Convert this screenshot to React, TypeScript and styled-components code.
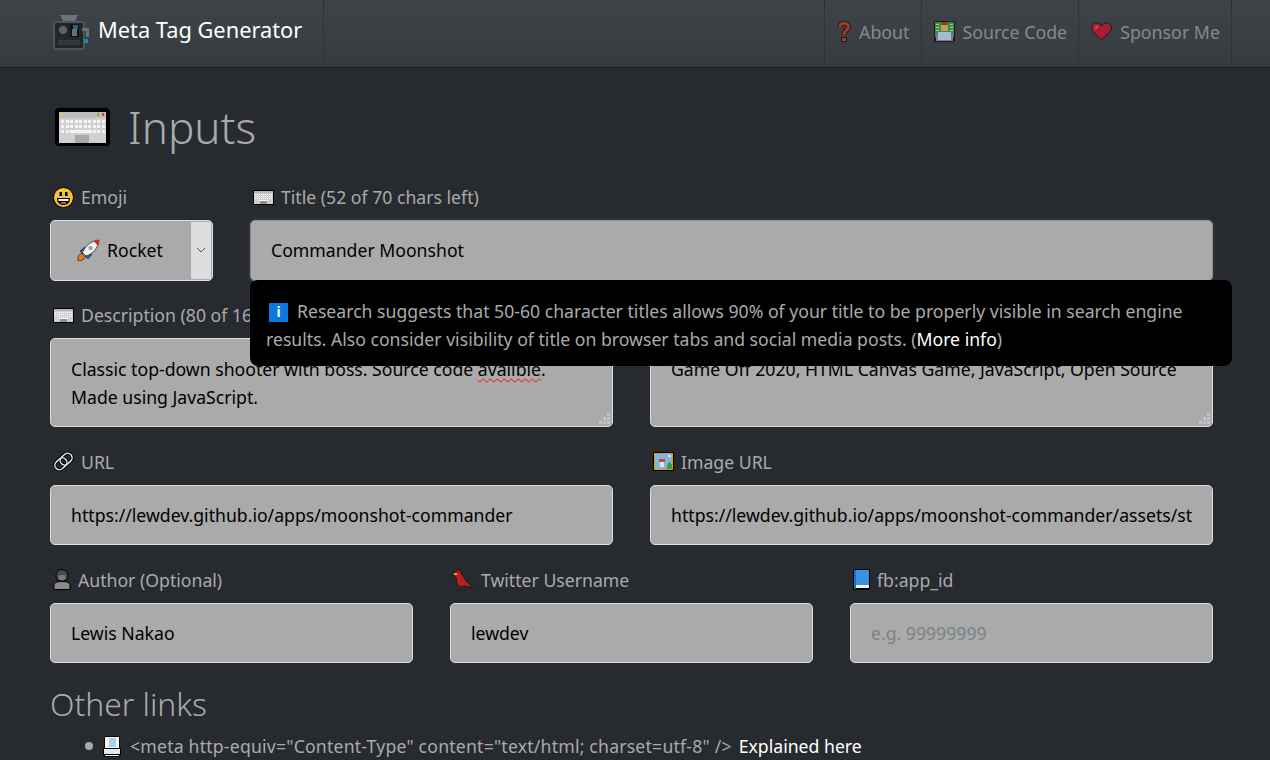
import React from "react";
import styled, { createGlobalStyle } from "styled-components";

const FONT = `"Noto Sans", "Open Sans", "Liberation Sans", sans-serif`;

const GlobalStyle = createGlobalStyle`
  html, body {
    margin: 0;
    height: 760px;
    overflow: hidden;
    background: #272b30;
  }
  body {
    font-family: ${FONT};
    font-size: 17.65px;
    color: #aaaaaa;
  }
  * { box-sizing: border-box; }
`;

const Bar = styled.header`
  display: flex;
  align-items: stretch;
  height: 68px;
  padding: 0 38px 0 52px;
  background: linear-gradient(#3e4348, #3a3f44 60%, #373b40);
  border-bottom: 1px solid #1c1e22;
`;

const Brand = styled.a`
  display: flex;
  align-items: center;
  gap: 6px;
  padding: 0 21px 4px 0;
  border-right: 1px solid #2f3337;
  color: #ffffff;
  font-size: 21.8px;
  white-space: nowrap;
`;

const BrandName = styled.span`
  padding-bottom: 4px;
`;

const NavLinks = styled.nav`
  display: flex;
  margin-left: auto;
  border-right: 1px solid #2f3337;
`;

const NavLink = styled.a`
  display: flex;
  align-items: center;
  gap: 8px;
  padding: 0 11px 4px 12px;
  border-left: 1px solid #2f3337;
  color: #85898c;
  font-size: 17.8px;
  white-space: nowrap;
`;

const Main = styled.main`
  padding: 0 57px 0 50px;
`;

const PageTitle = styled.h1`
  display: flex;
  align-items: center;
  gap: 18px;
  height: 115px;
  margin: 0;
  padding: 2px 0 0 5px;
  font-size: 44px;
  font-weight: 300;
  color: #aaaaaa;
`;

const FormGrid = styled.form`
  position: relative;
  display: grid;
  grid-template-columns: repeat(6, 1fr);
  column-gap: 37px;
  row-gap: 20.75px;
`;

const Field = styled.div<{ $span: number }>`
  grid-column: span ${(p) => p.$span};
  display: flex;
  flex-direction: column;
  gap: 9px;
`;

const Label = styled.label`
  display: flex;
  align-items: center;
  gap: 7px;
  height: 28px;
  padding-left: 3px;
  font-size: 17.65px;
  color: #aaaaaa;
  white-space: nowrap;
`;

const TextInput = styled.input<{ $focused?: boolean }>`
  width: 100%;
  height: 60.5px;
  padding: 0 20px;
  border: 1px solid ${(p) => (p.$focused ? "#8d8d8d" : "#dddddd")};
  border-radius: 5px;
  outline: none;
  background: #aaaaaa;
  color: #000000;
  font-family: ${FONT};
  font-size: 17.65px;
  box-shadow: ${(p) => (p.$focused ? "0 0 0 2px #2f3338" : "none")};
  &::placeholder {
    color: #7a8288;
    opacity: 1;
  }
`;

const SelectBox = styled.div`
  display: flex;
  height: 60.5px;
  border: 1px solid #dddddd;
  border-radius: 5px;
  overflow: hidden;
  background: #aaaaaa;
  color: #000000;
  font-size: 17.65px;
`;

const SelectValue = styled.div`
  flex: 1;
  display: flex;
  align-items: center;
  justify-content: center;
  gap: 7px;
  padding-right: 2px;
`;

const SelectArrow = styled.div`
  display: flex;
  align-items: center;
  justify-content: center;
  width: 20px;
  margin: 1px 1px 1px 0;
  background: #dddddd;
`;

const TextArea = styled.div`
  position: relative;
  height: 88.5px;
  padding: 16px 20px 0;
  border: 1px solid #dddddd;
  border-radius: 5px;
  background: #aaaaaa;
  color: #000000;
  font-size: 17.65px;
  line-height: 28px;
`;

const Misspelled = styled.span`
  text-decoration: underline wavy #ff0000 1px;
  text-underline-offset: 2px;
`;

const Grip = styled.svg`
  position: absolute;
  right: 1px;
  bottom: 1px;
`;

const Tip = styled.div`
  position: absolute;
  top: 97px;
  left: 200px;
  width: 982px;
  height: 86px;
  padding: 17px 16px 0;
  border-radius: 8px;
  background: #000000;
  color: #aaaaaa;
  font-size: 17.65px;
  line-height: 28px;
  z-index: 2;
`;

const TipIcon = styled.span`
  display: inline-flex;
  align-items: center;
  justify-content: center;
  width: 19px;
  height: 19px;
  margin: 0 9px 0 3px;
  vertical-align: 1px;
  background: #0a78dc;
  color: #ffffff;
  font-size: 14px;
  font-weight: 700;
  line-height: 1;
`;

const WhiteLink = styled.a`
  color: #ffffff;
`;

const SectionTitle = styled.h3`
  margin: 19px 0 0;
  font-size: 31.8px;
  font-weight: 300;
  line-height: 44px;
  color: #aaaaaa;
`;

const LinkList = styled.ul`
  margin: 8px 0 0;
  padding: 0 0 0 35px;
  list-style: none;
`;

const LinkItem = styled.li`
  position: relative;
  display: flex;
  align-items: center;
  gap: 9px;
  padding-left: 18px;
  white-space: nowrap;
  &::before {
    content: "";
    position: absolute;
    left: 0;
    top: 50%;
    width: 8px;
    height: 8px;
    margin-top: -4px;
    border-radius: 50%;
    background: #aaaaaa;
  }
`;

const MetaCode = styled.span`
  letter-spacing: 0.2px;
  margin-right: 7px;
`;

const Px = styled.svg`
  flex: none;
  shape-rendering: crispEdges;
`;

const Smooth = styled.svg`
  flex: none;
`;

const KeyboardIcon = () => (
  <Px width="55" height="38" viewBox="0 0 55 38">
    <rect x="0" y="0" width="55" height="38" rx="4" fill="#000" />
    <rect x="4" y="4" width="47" height="31" fill="#d0d0d0" />
    <rect x="4" y="4" width="47" height="6" fill="#bcbcbc" />
    <rect x="5" y="5" width="2" height="3" fill="#e8d820" />
    <rect x="42" y="5" width="2" height="3" fill="#8bb030" />
    <rect x="47" y="5" width="2" height="3" fill="#d84030" />
    {[0, 1, 2].map((r) =>
      [0, 1, 2, 3, 4, 5, 6, 7, 8, 9].map((c) => (
        <rect key={`${r}-${c}`} x={6 + c * 4.5} y={12 + r * 5} width="3" height="3" fill="#f4f4f4" />
      ))
    )}
    <rect x="17" y="22" width="20" height="3" fill="#f4f4f4" />
    <rect x="20" y="27" width="14" height="8" fill="#a8a8a8" />
  </Px>
);

const SmallKeyboardIcon = () => (
  <Px width="21" height="15" viewBox="0 0 21 15">
    <rect width="21" height="15" rx="1" fill="#000" />
    <rect x="1" y="1" width="19" height="13" fill="#cfcfcf" />
    <rect x="1" y="1" width="19" height="2" fill="#b4b4b4" />
    {[4, 6, 8].map((y) =>
      [2, 4, 6, 8, 10, 12, 14, 16, 18].map((x) => (
        <rect key={`${x}-${y}`} x={x} y={y} width="1" height="1" fill="#fafafa" />
      ))
    )}
    <rect x="6" y="10" width="9" height="1" fill="#fafafa" />
    <rect x="7" y="11" width="7" height="3" fill="#8f8f8f" />
  </Px>
);

const LogoIcon = () => (
  <Px width="40" height="38" viewBox="0 0 40 38">
    <path d="M8 2h18l-3 6H11z" fill="#6d7276" />
    <rect x="2" y="9" width="30" height="27" rx="2" fill="#23262a" stroke="#50555a" strokeWidth="1.5" />
    <circle cx="11" cy="17" r="4" fill="#5d6266" />
    <rect x="18" y="11" width="9" height="13" fill="#111" />
    <rect x="20" y="16" width="5" height="7" fill="#6b6f73" />
    <rect x="21" y="12" width="5" height="4" fill="#0d6f8a" />
    <rect x="6" y="27" width="22" height="5" fill="#34383c" />
    <path d="M30 16h5v8" fill="none" stroke="#6d7276" strokeWidth="3" />
    <rect x="32" y="26" width="4" height="4" fill="#0f8fb0" />
  </Px>
);

const QuestionIcon = () => (
  <Smooth width="14" height="21" viewBox="0 0 14 21">
    <path d="M3 6c0-5 8.500-5 8.500 0 0 3-4.500 3-4.500 8" fill="none" stroke="#1c1c1c" strokeWidth="5" />
    <path d="M3 6c0-5 8.500-5 8.500 0 0 3-4.500 3-4.500 8" fill="none" stroke="#a63a22" strokeWidth="3" />
    <rect x="4.500" y="16.500" width="5" height="4" fill="#a63a22" stroke="#1c1c1c" />
  </Smooth>
);

const CoderIcon = () => (
  <Px width="21" height="21" viewBox="0 0 21 21">
    <rect width="21" height="21" rx="2" fill="#1c1c1c" />
    <rect x="1" y="1" width="19" height="15" fill="#3e8a4e" />
    <rect x="2" y="3" width="3" height="1" fill="#a4c890" />
    <rect x="2" y="6" width="3" height="1" fill="#a4c890" />
    <rect x="2" y="9" width="3" height="1" fill="#a4c890" />
    <rect x="16" y="3" width="3" height="1" fill="#a4c890" />
    <rect x="16" y="6" width="3" height="1" fill="#a4c890" />
    <rect x="16" y="9" width="3" height="1" fill="#a4c890" />
    <rect x="7" y="1" width="7" height="3" fill="#7a4a20" />
    <rect x="7" y="4" width="7" height="6" fill="#c99a50" />
    <rect x="2" y="13" width="17" height="7" fill="#8a6fa0" />
    <rect x="4" y="11" width="13" height="8" fill="#9cc0d0" />
  </Px>
);

const HeartIcon = () => (
  <Smooth width="21" height="19" viewBox="0 0 21 19">
    <path d="M10.500 18 1.500 9C-1 5 2 1 5.500 1c2.500 0 4 1.500 5 3 1-1.500 2.500-3 5-3C19 1 22 5 19.500 9z" fill="#a81e30" stroke="#1c1c1c" />
    <path d="M4 7l3-3" stroke="#d06070" strokeWidth="1.500" />
  </Smooth>
);

const GrinIcon = () => (
  <Smooth width="21" height="21" viewBox="0 0 21 21">
    <circle cx="10.500" cy="10.500" r="10" fill="#f5c33b" stroke="#000" />
    <rect x="6.500" y="5" width="2.500" height="4" fill="#000" />
    <rect x="12" y="5" width="2.500" height="4" fill="#000" />
    <path d="M4 11h13c0 5-3 7-6.500 7S4 16 4 11z" fill="#000" />
    <rect x="5.500" y="12" width="10" height="2" fill="#fff" />
    <rect x="8" y="15" width="5" height="2" fill="#d8483e" />
  </Smooth>
);

const RocketIcon = () => (
  <Smooth width="23" height="22" viewBox="0 0 23 22">
    <path d="M1 21.500c-.500-4 1.500-7 4-7l3 3c0 2.500-3 4.500-7 4z" fill="#e87820" stroke="#222" strokeWidth=".7" />
    <path d="M3 12l5-4-2 7zM11 20l4-5-7 2z" fill="#2a6cc0" stroke="#222" strokeWidth=".7" />
    <path d="M5.500 13.500C8 7 14 2 22 1c-1 8-6 14-13 16z" fill="#eef2f5" stroke="#222" strokeWidth=".7" />
    <path d="M16.500 2 22 1l-.800 6z" fill="#d81e28" />
    <circle cx="13.500" cy="9" r="2.200" fill="#a0a6ac" />
  </Smooth>
);

const LinkIcon = () => (
  <Smooth width="21" height="21" viewBox="0 0 21 21">
    <g fill="none" transform="rotate(-42 10.500 10.500)">
      <rect x="0.500" y="6" width="13" height="9" rx="4.500" stroke="#000" strokeWidth="3.500" />
      <rect x="7.500" y="6" width="13" height="9" rx="4.500" stroke="#000" strokeWidth="3.500" />
      <rect x="0.500" y="6" width="13" height="9" rx="4.500" stroke="#e4e4e4" strokeWidth="1.500" />
      <rect x="7.500" y="6" width="13" height="9" rx="4.500" stroke="#e4e4e4" strokeWidth="1.500" />
    </g>
  </Smooth>
);

const PictureIcon = () => (
  <Px width="21" height="19" viewBox="0 0 21 19">
    <rect width="21" height="19" fill="#000" />
    <rect x="1" y="1" width="19" height="17" fill="#e8990c" />
    <rect x="2" y="2" width="17" height="15" fill="#7fb6dc" />
    <path d="M13 17l3-7 3 3v4z" fill="#3d9a3d" />
    <rect x="15" y="3" width="3" height="2" fill="#f4e47a" />
    <rect x="6" y="7" width="6" height="3" fill="#c24a3a" />
    <rect x="7" y="10" width="4" height="5" fill="#eadfd0" />
  </Px>
);

const AuthorIcon = () => (
  <Smooth width="18" height="21" viewBox="0 0 18 21">
    <path d="M1 20.500v-4c0-3 3-4 8-4s8 1 8 4v4z" fill="#8a8a8a" stroke="#000" />
    <circle cx="9" cy="6.500" r="6" fill="#4a4a4a" stroke="#000" />
    <rect x="5.500" y="6" width="7" height="5" rx="2" fill="#7a7a7a" />
  </Smooth>
);

const BirdIcon = () => (
  <Smooth width="21" height="21" viewBox="0 0 21 21">
    <path d="M4 0l3 2 1.500 3 3.500 5 3 4 5 4h-5l-3-1-5 1-3-3-1-7-2-1 1.500-2z" fill="#b81e20" stroke="#111" strokeWidth=".8" />
    <rect x="1" y="4" width="3" height="2" fill="#e8a020" />
    <rect x="5" y="17" width="1" height="3" fill="#333" />
    <rect x="8" y="17" width="1" height="3" fill="#333" />
    <rect x="4" y="20" width="6" height="1" fill="#222" />
  </Smooth>
);

const BookIcon = () => (
  <Px width="17" height="21" viewBox="0 0 17 21">
    <rect width="17" height="21" rx="2" fill="#000" />
    <rect x="1" y="1" width="2" height="19" fill="#1d6fc4" />
    <rect x="3" y="1" width="13" height="15" fill="#3a93e0" />
    <rect x="3" y="16" width="13" height="3" fill="#f2f2f2" />
  </Px>
);

const MemoIcon = () => (
  <Px width="18" height="21" viewBox="0 0 18 21">
    <rect x="1" y="0" width="16" height="21" rx="2" fill="#000" />
    <rect x="2" y="1" width="14" height="19" fill="#f4f4f4" />
    <rect x="6" y="2" width="7" height="9" fill="#a8d0ec" />
    <rect x="0" y="12" width="18" height="7" fill="#000" />
    <rect x="1" y="13" width="16" height="5" fill="#e8e8e8" />
  </Px>
);

const ResizeGrip = () => (
  <Grip width="12" height="12" viewBox="0 0 12 12">
    <path d="M8 0h3v3H8zM4 4h3v3H4zM8 4h3v3H8zM0 8h3v3H0zM4 8h3v3H4zM8 8h3v3H8z" fill="#c4c4c4" />
  </Grip>
);

const App = () => (
  <>
    <GlobalStyle />
    <Bar>
      <Brand>
        <LogoIcon />
        <BrandName>Meta Tag Generator</BrandName>
      </Brand>
      <NavLinks>
        <NavLink>
          <QuestionIcon />
          About
        </NavLink>
        <NavLink>
          <CoderIcon />
          Source Code
        </NavLink>
        <NavLink>
          <HeartIcon />
          Sponsor Me
        </NavLink>
      </NavLinks>
    </Bar>
    <Main>
      <PageTitle>
        <KeyboardIcon />
        Inputs
      </PageTitle>
      <FormGrid>
        <Field $span={1}>
          <Label>
            <GrinIcon />
            Emoji
          </Label>
          <SelectBox>
            <SelectValue>
              <RocketIcon />
              Rocket
            </SelectValue>
            <SelectArrow>
              <svg width="10" height="6" viewBox="0 0 10 6">
                <path d="M1 1l4 4 4-4" fill="none" stroke="#555" />
              </svg>
            </SelectArrow>
          </SelectBox>
        </Field>
        <Field $span={5}>
          <Label>
            <SmallKeyboardIcon />
            Title (52 of 70 chars left)
          </Label>
          <TextInput $focused defaultValue="Commander Moonshot" />
        </Field>
        <Tip>
          <TipIcon>i</TipIcon>
          Research suggests that 50-60 character titles allows 90% of your title to be properly visible in search engine
          results. Also consider visibility of title on browser tabs and social media posts. (<WhiteLink>More info</WhiteLink>)
        </Tip>
        <Field $span={3}>
          <Label>
            <SmallKeyboardIcon />
            Description (80 of 160 chars left)
          </Label>
          <TextArea>
            Classic top-down shooter with boss. Source code <Misspelled>avalible</Misspelled>.
            <br />
            Made using JavaScript.
            <ResizeGrip />
          </TextArea>
        </Field>
        <Field $span={3}>
          <Label>Keywords</Label>
          <TextArea>
            Game Off 2020, HTML Canvas Game, JavaScript, Open Source
            <ResizeGrip />
          </TextArea>
        </Field>
        <Field $span={3}>
          <Label>
            <LinkIcon />
            URL
          </Label>
          <TextInput defaultValue="https://lewdev.github.io/apps/moonshot-commander" />
        </Field>
        <Field $span={3}>
          <Label>
            <PictureIcon />
            Image URL
          </Label>
          <TextInput defaultValue="https://lewdev.github.io/apps/moonshot-commander/assets/start-screen.png" />
        </Field>
        <Field $span={2}>
          <Label>
            <AuthorIcon />
            Author (Optional)
          </Label>
          <TextInput defaultValue="Lewis Nakao" />
        </Field>
        <Field $span={2}>
          <Label>
            <BirdIcon />
            Twitter Username
          </Label>
          <TextInput defaultValue="lewdev" />
        </Field>
        <Field $span={2}>
          <Label>
            <BookIcon />
            fb:app_id
          </Label>
          <TextInput placeholder="e.g. 99999999" />
        </Field>
      </FormGrid>
      <SectionTitle>Other links</SectionTitle>
      <LinkList>
        <LinkItem>
          <MemoIcon />
          <span>
            <MetaCode>{'<meta http-equiv="Content-Type" content="text/html; charset=utf-8" />'}</MetaCode>
            <WhiteLink>Explained here</WhiteLink>
          </span>
        </LinkItem>
      </LinkList>
    </Main>
  </>
);

export default App;
